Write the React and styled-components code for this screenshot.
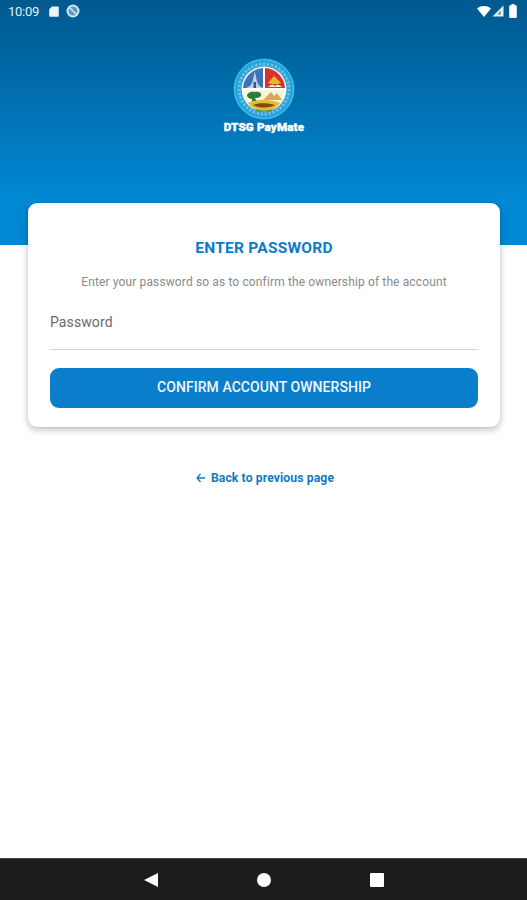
import React from "react";
import styled, { createGlobalStyle } from "styled-components";

const Global = createGlobalStyle`
  html, body { margin: 0; padding: 0; background: #fff; }
  body { font-family: Roboto, "Liberation Sans", sans-serif; }
  * { box-sizing: border-box; }
`;
const Screen = styled.div`
  width: 527px; height: 900px; display: flex; flex-direction: column; background: #fff; overflow: hidden;
`;
const Hero = styled.header`
  height: 245px; flex: none; display: flex; flex-direction: column;
  background: linear-gradient(180deg, #005a90 0%, #005f98 12%, #0288d3 82%, #0288d3 100%);
`;
const StatusBar = styled.div`
  height: 24px; flex: none; display: flex; align-items: center; justify-content: space-between; padding: 0 10px 2px 8px;
  color: #e6f0f6; font-size: 13px;
`;
const StatusGroup = styled.div`
  display: flex; align-items: center; gap: ${p => p.$gap || 0}px;
`;
const Time = styled.span`
  width: 30px; margin-right: 11px; letter-spacing: -0.25px; white-space: nowrap;
`;
const LogoWrap = styled.div`
  display: flex; flex-direction: column; align-items: center; margin-top: 34px; margin-left: 1px;
`;
const LogoText = styled.div`
  font-family: Roboto, sans-serif; font-weight: 900; font-size: 11.6px; line-height: 14px; color: #fff; margin-top: 0; letter-spacing: 0.15px;
  -webkit-text-stroke: 0.4px #fff;
`;
const Card = styled.section`
  flex: none; width: 472px; height: 224px; margin: -42px 0 0 28px; background: #fff; border-radius: 9px;
  box-shadow: 0 3px 7px rgba(0,0,0,.24), 0 0 2px rgba(0,0,0,.12);
  display: flex; flex-direction: column; align-items: stretch; padding: 36px 22px 0;
`;
const Title = styled.h1`
  margin: 0; text-align: center; font-size: 15.5px; line-height: 18px; font-weight: 700; color: #0a7cca; letter-spacing: 0.25px;
`;
const Sub = styled.p`
  margin: 16px 0 0; text-align: center; font-size: 12px; line-height: 18px; color: #8a8a8a; letter-spacing: 0.13px; white-space: nowrap;
`;
const Field = styled.div`
  margin-top: 22px; height: 37px; border-bottom: 1px solid #d6d6d6; font-size: 14px; line-height: 18px; color: #6a6a6a; letter-spacing: 0.1px;
`;
const Button = styled.button`
  margin-top: 18px; height: 40px; width: 100%; border: 0; border-radius: 9px; background: #0a7dcb; color: #f2f8fc;
  font: 500 14px Roboto, sans-serif; letter-spacing: 0.05px; text-transform: uppercase; padding: 0 0 2px;
`;
const Back = styled.a`
  display: flex; justify-content: center; align-items: center; gap: 6px; margin: 43px 0 0 3px; height: 16px;
  color: #1379bf; font-size: 12.2px; font-weight: 700; letter-spacing: 0.1px;
`;
const Spacer = styled.div`
  flex: 1;
`;
const NavBar = styled.nav`
  height: 42px; flex: none; background: #1c1c1c; border-top: 1px solid #444; display: flex; align-items: center; justify-content: center; gap: 97px; padding: 0 0 0 1px;
`;
const NavIcon = styled.svg`
  width: 16px; height: 16px; display: block; fill: #fff;
`;

const Logo = () => (
  <svg width="62" height="62" viewBox="0 0 62 62" role="img" aria-label="Logo">
    <circle cx="31" cy="31" r="30.5" fill="#1ea6de" />
    <circle cx="31" cy="31" r="29.5" fill="none" stroke="#4fc3e8" strokeWidth="1" />
    <circle cx="31" cy="31" r="25" fill="none" stroke="#7fb8d8" strokeWidth="3" strokeDasharray="2.4 1.6" />
    <circle cx="31" cy="31" r="22.500" fill="#fff" />
    <path d="M10 30A21 21 0 0 1 30 10V30Z" fill="#3f74b4" />
    <path d="M13 30c4-1 6-4 7-8 .6-3 1.300-6 1.800-9 .5 3 1.200 6 1.800 9 1 4 3 7 6.400 8Z" fill="#c3d3e6" />
    <path d="M20.500 24h2.600v6h-2.600Z" fill="#2a5a99" />
    <path d="M32 10A21 21 0 0 1 52 30H32Z" fill="#d6342c" />
    <path d="M35 25l6-7 7 7-3 1h-7Z" fill="#e9b92b" />
    <path d="M35 29c3-3 6-3 7-.5 1-2.500 4-2.500 7 .5Z" fill="#f5ecc8" />
    <path d="M10 32H52A21 21 0 0 1 10 32Z" fill="#f8f5dc" />
    <path d="M14 38c0-3 4-5 8-4 4-1 7 1 6 4-2 2-4 2-6 2l2 4-5 1 0-4c-2 0-4-1-5-3Z" fill="#2f7d35" />
    <path d="M30 42l8-8 3 4 3-3 5 7Z" fill="#d2ab5c" />
    <path d="M15 45c8-4 24-4 32 0-3 5-9 8-16 8s-13-3-16-8Z" fill="#e8bb2c" />
    <path d="M20 47c6-2.500 15-2.500 22 0-2 1.500-6 2.500-11 2.500s-8-1-11-2.500Z" fill="#7e4a1e" />
    <path d="M22 51c6 2 12 2 18 0l-3 2.500h-12Z" fill="#3f8f3a" />
  </svg>
);

export default function App() {
  return (
    <Screen>
      <Global />
      <Hero>
        <StatusBar>
          <StatusGroup>
            <Time>10:09</Time>
            <svg width="10" height="11" viewBox="0 0 10 11" style={{ marginRight: 7 }}><path d="M3 0.500H9a.8.8 0 0 1 .8.800V10a.8.8 0 0 1-.8.800H1A.8.8 0 0 1 .2 10V3.300Z" fill="#eef5f9" /></svg>
            <svg width="14" height="14" viewBox="0 0 14 14"><circle cx="7" cy="7" r="5.500" fill="#5f97bd" stroke="#d5e5ef" strokeWidth="2" /><path d="M3 3l8 8" stroke="#d5e5ef" strokeWidth="1.600" /></svg>
          </StatusGroup>
          <StatusGroup $gap={1}>
            <svg width="14" height="11" viewBox="0 0 14 11"><path d="M0 2.500C4-.8 10-.8 14 2.500L7 11Z" fill="#fff" /></svg>
            <svg width="12" height="12" viewBox="0 0 12 12"><path d="M11.500.500V11.500H.500Z" fill="#e9f2f7" /><path d="M8.800 5.500L5.200 9.600h3.600Z" fill="#4f8fb8" /></svg>
            <svg width="8" height="14" viewBox="0 0 8 14" style={{ marginLeft: 4 }}><path d="M2.500 0h3v1.300h1.300a1 1 0 0 1 1 1V13a1 1 0 0 1-1 1H1.200a1 1 0 0 1-1-1V2.300a1 1 0 0 1 1-1h1.300Z" fill="#fff" /></svg>
          </StatusGroup>
        </StatusBar>
        <LogoWrap>
          <Logo />
          <LogoText>DTSG PayMate</LogoText>
        </LogoWrap>
      </Hero>
      <Card>
        <Title>ENTER PASSWORD</Title>
        <Sub>Enter your password so as to confirm the ownership of the account</Sub>
        <Field>Password</Field>
        <Button>Confirm account ownership</Button>
      </Card>
      <Back>
        <svg width="9" height="10" viewBox="0 0 9 10"><path d="M4.500 1L1 5l3.500 4M1 5h8" fill="none" stroke="#1379bf" strokeWidth="1.300" /></svg>
        Back to previous page
      </Back>
      <Spacer />
      <NavBar>
        <NavIcon viewBox="0 0 16 16"><path d="M15 1V15L1 8Z" /></NavIcon>
        <NavIcon viewBox="0 0 16 16"><circle cx="8" cy="8" r="7" /></NavIcon>
        <NavIcon viewBox="0 0 16 16"><rect x="1" y="1" width="14" height="14" rx="1" /></NavIcon>
      </NavBar>
    </Screen>
  );
}
